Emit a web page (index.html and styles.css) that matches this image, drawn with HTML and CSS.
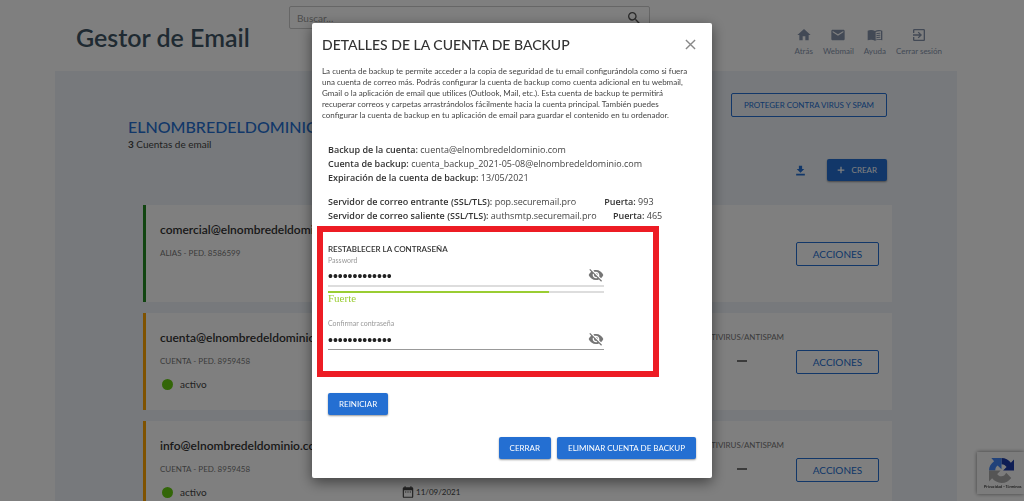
FILE: index.html
```html
<!DOCTYPE html>
<html lang="es">
<head>
    <meta charset="UTF-8">
    <meta name="viewport" content="width=device-width, initial-scale=1.0">
    <title>Gestor de Email</title>
    <link rel="stylesheet" href="styles.css">
</head>
<body>
    <header class="header">
        <h1>Gestor de Email</h1>
        <form class="search">
            <input type="search" placeholder="Buscar..." aria-label="Buscar">
            <button type="button" aria-label="Buscar">
                <svg viewBox="0 0 24 24"><path d="M15.5 14h-.79l-.28-.27A6.47 6.47 0 0 0 16 9.5 6.5 6.5 0 1 0 9.5 16c1.61 0 3.09-.59 4.23-1.57l.27.28v.79l5 4.99L20.49 19l-4.99-5zm-6 0C7.01 14 5 11.99 5 9.5S7.01 5 9.5 5 14 7.01 14 9.5 11.99 14 9.5 14z"/></svg>
            </button>
        </form>
        <nav class="menu">
            <a href="#"><svg viewBox="0 0 24 24"><path d="M10 20v-6h4v6h5v-8h3L12 3 2 12h3v8z"/></svg>Atrás</a>
            <a href="#"><svg viewBox="0 0 24 24"><path d="M20 4H4c-1.100 0-2 .9-2 2v12c0 1.100.9 2 2 2h16c1.100 0 2-.9 2-2V6c0-1.100-.9-2-2-2zm0 4-8 5-8-5V6l8 5 8-5z"/></svg>Webmail</a>
            <a href="#"><svg viewBox="0 0 24 24"><path fill-rule="evenodd" d="M12 6C9 4 4 4 1 5.500V20c3-1.300 8-1.300 11 .5 3-1.800 8-1.800 11-.5V5.500C20 4 15 4 12 6zm9 12.500c-3-.7-6-.3-8 .7V7.500c2-1 5-1.500 8-1zM14 9.500c2-.8 4-1 6-.7v1.500c-2-.3-4-.1-6 .7zm0 3c2-.8 4-1 6-.7v1.500c-2-.3-4-.1-6 .7zm0 3c2-.8 4-1 6-.7v1.500c-2-.3-4-.1-6 .7z"/></svg>Ayuda</a>
            <a href="#"><svg viewBox="0 0 24 24"><path d="M10.090 15.590 11.500 17l5-5-5-5-1.410 1.410L12.670 11H3v2h9.670zM19 3H5a2 2 0 0 0-2 2v4h2V5h14v14H5v-4H3v4a2 2 0 0 0 2 2h14c1.100 0 2-.9 2-2V5c0-1.100-.9-2-2-2z"/></svg>Cerrar sesión</a>
        </nav>
    </header>

    <main class="panel">
        <div class="panel-top">
            <button class="btn-outline" type="button">PROTEGER CONTRA VIRUS Y SPAM</button>
        </div>
        <h2>ELNOMBREDELDOMINIO.COM</h2>
        <p class="count"><b>3</b> Cuentas de email</p>
        <div class="tools">
            <button class="download" type="button" aria-label="Descargar">
                <svg viewBox="0 0 24 24"><path d="M19 9h-4V3H9v6H5l7 7zM4 18v3h16v-3z"/></svg>
            </button>
            <button class="btn" type="button"><svg viewBox="0 0 24 24"><path d="M20 13.500h-6.500V20h-3v-6.500H4v-3h6.500V4h3v6.500H20z"/></svg>CREAR</button>
        </div>

        <div class="cards">
            <article class="card alias">
                <div class="info">
                    <h3>comercial@elnombredeldominio.com</h3>
                    <p class="type">ALIAS - PED. 8586599</p>
                </div>
                <button class="btn-outline actions" type="button">ACCIONES</button>
            </article>
            <article class="card">
                <div class="info">
                    <h3>cuenta@elnombredeldominio.com</h3>
                    <p class="type">CUENTA - PED. 8959458</p>
                    <p class="status"><span class="dot"></span>activo</p>
                </div>
                <p class="date"><svg viewBox="0 0 24 24"><path d="M9 11H7v2h2zm4 0h-2v2h2zm4 0h-2v2h2zm2-7h-1V2h-2v2H8V2H6v2H5a2 2 0 0 0-2 2v14a2 2 0 0 0 2 2h14a2 2 0 0 0 2-2V6a2 2 0 0 0-2-2zm0 16H5V9h14z"/></svg>11/09/2021</p>
                <p class="antivirus">ANTIVIRUS/ANTISPAM<span class="dash"></span></p>
                <button class="btn-outline actions" type="button">ACCIONES</button>
            </article>
            <article class="card">
                <div class="info">
                    <h3>info@elnombredeldominio.com</h3>
                    <p class="type">CUENTA - PED. 8959458</p>
                    <p class="status"><span class="dot"></span>activo</p>
                </div>
                <p class="date"><svg viewBox="0 0 24 24"><path d="M9 11H7v2h2zm4 0h-2v2h2zm4 0h-2v2h2zm2-7h-1V2h-2v2H8V2H6v2H5a2 2 0 0 0-2 2v14a2 2 0 0 0 2 2h14a2 2 0 0 0 2-2V6a2 2 0 0 0-2-2zm0 16H5V9h14z"/></svg>11/09/2021</p>
                <p class="antivirus">ANTIVIRUS/ANTISPAM<span class="dash"></span></p>
                <button class="btn-outline actions" type="button">ACCIONES</button>
            </article>
        </div>
    </main>

    <!-- reCAPTCHA badge -->
    <div class="captcha">
        <svg viewBox="0 0 64 64">
            <path fill="#1c3aa9" d="M64 32V4l-8 8C50 5 42 0 32 0v16c6 0 10 3 13 7l-9 9z"/>
            <path fill="#4285f4" d="M32 0H6l7 8C5 14 0 22 0 32h16c0-6 2-10 6-13l10 10z"/>
            <path fill="#ababab" d="M0 32v28l8-8c6 7 14 12 24 12 11 0 19-5 25-13L44 38c-3 6-7 9-12 9-6 0-10-3-11-6l9-9z"/>
        </svg>
        <p>Privacidad - Términos</p>
    </div>

    <!-- Backup account modal -->
    <div class="overlay">
        <div class="modal" role="dialog" aria-labelledby="modalTitle">
            <div class="modal-header">
                <h2 id="modalTitle">DETALLES DE LA CUENTA DE BACKUP</h2>
                <button class="close" type="button" aria-label="Cerrar">
                    <svg viewBox="0 0 12 12"><path d="M1 1l10 10M11 1 1 11"/></svg>
                </button>
            </div>
            <p class="intro">La cuenta de backup te permite acceder a la copia de seguridad de tu email configurándola como si fuera<br>
                una cuenta de correo más. Podrás configurar la cuenta de backup como cuenta adicional en tu webmail,<br>
                Gmail o la aplicación de email que utilices (Outlook, Mail, etc.). Esta cuenta de backup te permitirá<br>
                recuperar correos y carpetas arrastrándolos fácilmente hacia la cuenta principal. También puedes<br>
                configurar la cuenta de backup en tu aplicación de email para guardar el contenido en tu ordenador.</p>
            <div class="details">
                <p><b>Backup de la cuenta:</b> cuenta@elnombredeldominio.com</p>
                <p><b>Cuenta de backup:</b> cuenta_backup_2021-05-08@elnombredeldominio.com</p>
                <p><b>Expiración de la cuenta de backup:</b> 13/05/2021</p>
            </div>
            <div class="details servers">
                <p><b>Servidor de correo entrante (SSL/TLS):</b> pop.securemail.pro &nbsp;&nbsp;&nbsp;&nbsp;&nbsp;<span class="port"><b>Puerta:</b> 993</span></p>
                <p><b>Servidor de correo saliente (SSL/TLS):</b> authsmtp.securemail.pro <span class="port"><b>Puerta:</b> 465</span></p>
            </div>

            <form class="reset">
                <h3>RESTABLECER LA CONTRASEÑA</h3>
                <label for="password">Password</label>
                <div class="field strong">
                    <input type="password" id="password" value="contrasena123">
                    <button type="button" aria-label="Mostrar contraseña">
                        <svg viewBox="0 0 24 24"><path d="M12 7c2.760 0 5 2.240 5 5 0 .65-.13 1.260-.36 1.830l2.920 2.920c1.510-1.260 2.700-2.890 3.430-4.750C21.270 7.610 17 4.500 12 4.500c-1.400 0-2.740.25-3.980.7l2.160 2.160C10.740 7.130 11.350 7 12 7zM2 4.270l2.740 2.740C3.080 8.300 1.780 10.020 1 12c1.730 4.390 6 7.500 11 7.500 1.550 0 3.030-.3 4.380-.84L19.730 22 21 20.730 3.270 3zM7.530 9.800l1.550 1.550c-.05.21-.08.43-.08.65 0 1.660 1.340 3 3 3 .22 0 .44-.03.65-.08l1.550 1.550c-.67.33-1.410.53-2.200.53-2.760 0-5-2.240-5-5 0-.79.2-1.530.53-2.200zm4.310-.78 3.150 3.150.02-.16c0-1.660-1.340-3-3-3z"/></svg>
                    </button>
                </div>
                <div class="meter"><div class="meter-fill" style="width: 80%"></div></div>
                <p class="strength">Fuerte</p>
                <label for="confirm">Confirmar contraseña</label>
                <div class="field">
                    <input type="password" id="confirm" value="contrasena123">
                    <button type="button" aria-label="Mostrar contraseña">
                        <svg viewBox="0 0 24 24"><path d="M12 7c2.760 0 5 2.240 5 5 0 .65-.13 1.260-.36 1.830l2.920 2.920c1.510-1.260 2.700-2.890 3.430-4.750C21.270 7.610 17 4.500 12 4.500c-1.400 0-2.740.25-3.980.7l2.160 2.160C10.740 7.130 11.350 7 12 7zM2 4.270l2.740 2.740C3.080 8.300 1.780 10.020 1 12c1.730 4.390 6 7.500 11 7.500 1.550 0 3.030-.3 4.380-.84L19.730 22 21 20.730 3.270 3zM7.530 9.800l1.550 1.550c-.05.21-.08.43-.08.65 0 1.660 1.340 3 3 3 .22 0 .44-.03.65-.08l1.550 1.550c-.67.33-1.410.53-2.200.53-2.760 0-5-2.240-5-5 0-.79.2-1.530.53-2.200zm4.310-.78 3.150 3.150.02-.16c0-1.660-1.340-3-3-3z"/></svg>
                    </button>
                </div>
            </form>

            <button class="btn restart" type="button">REINICIAR</button>
            <div class="modal-footer">
                <button class="btn" type="button">CERRAR</button>
                <button class="btn" type="button">ELIMINAR CUENTA DE BACKUP</button>
            </div>
        </div>
    </div>
</body>
</html>
```
FILE: styles.css
```css
* { box-sizing: border-box; }
body { font-family: Lato, sans-serif; margin: 0; color: #444; background: white; overflow: hidden; }
h1, h2, h3, p { margin: 0; }
button { font-family: inherit; cursor: pointer; padding: 0; border: none; background: none; }
svg { display: block; fill: currentColor; }

/* Header */
.header { display: grid; grid-template-columns: 213px 361px 1fr; height: 71px; padding: 6px 82px 0 76px; }
.header h1 { font-size: 25px; font-weight: 600; line-height: 30px; padding-top: 16px; color: #3f5564; white-space: nowrap; }
.search { display: flex; align-items: center; height: 23px; border: 1px solid #ccc; border-radius: 2px; padding: 0 7px; }
.search input { flex: 1; min-width: 0; border: none; outline: none; background: none; font-family: inherit; font-size: 10px; padding: 0; }
.search input::placeholder { color: #999; }
.search svg { width: 16px; height: 16px; color: #555; }
.menu { display: flex; justify-content: flex-end; gap: 10px; padding-top: 21px; }
.menu a { display: flex; flex-direction: column; align-items: center; gap: 2px; font-size: 8px; line-height: 12px; color: #8593ab; text-decoration: none; white-space: nowrap; }
.menu svg { width: 16px; height: 16px; }

/* Buttons */
.btn { display: flex; align-items: center; gap: 6px; height: 22px; padding: 0 11px; border-radius: 2px; background: #246fd2; color: white; font-size: 8px; box-shadow: 0 1px 2px rgba(0,0,0,0.4); }
.btn svg { width: 10px; height: 10px; }
.btn-outline { height: 24px; border: 1px solid #246fd2; border-radius: 2px; color: #246fd2; font-size: 8px; padding: 0 12px; }

/* Accounts panel */
.panel { margin: 0 67px 0 55px; padding: 22px 65px 40px 73px; background: #eef3f9; }
.panel-top { display: flex; justify-content: flex-end; padding-right: 5px; }
.panel h2 { font-size: 16px; font-weight: 500; line-height: 20px; color: #246fd2; }
.count { font-size: 10px; line-height: 14px; }
.tools { display: flex; justify-content: flex-end; align-items: center; gap: 20px; padding: 8px 5px 0 0; }
.tools .btn { padding: 0 10px 0 9px; }
.download { color: #246fd2; }
.download svg { width: 13px; height: 13px; }
.cards { display: flex; flex-direction: column; gap: 11px; margin: 24px 0 0 15px; }
.card { display: flex; align-items: center; height: 97px; padding: 0 13px 0 14px; background: white; border-left: 3px solid #ffa500; }
.card.alias { border-left-color: #228b22; }
.info { align-self: flex-start; width: 241px; padding-top: 16px; }
.card h3 { font-size: 12px; font-weight: 600; line-height: 18px; color: #333; white-space: nowrap; }
.type { font-size: 8px; line-height: 12px; margin-top: 8px; color: #777; }
.status { display: flex; align-items: center; gap: 7px; padding-left: 2px; margin-top: 10px; font-size: 10px; line-height: 14px; }
.dot { width: 11px; height: 11px; border-radius: 50%; background: #66cc11; }
.date { display: flex; align-items: center; align-self: flex-end; gap: 1px; font-size: 8px; line-height: 14px; padding-bottom: 19px; }
.date svg { width: 14px; height: 14px; }
.antivirus { display: flex; flex-direction: column; align-items: center; align-self: flex-start; gap: 17px; margin: 18px 12px 0 auto; font-size: 8px; line-height: 12px; color: #777; }
.dash { width: 10px; height: 2px; background: #777; }
.actions { width: 83px; font-size: 10px; }
.alias .actions { margin-left: auto; }

/* reCAPTCHA badge */
.captcha { position: fixed; right: 0; bottom: 7px; width: 47px; height: 42px; padding: 6px 0 0 12px; background: #f9f9f9; box-shadow: 0 0 4px #808080; }
.captcha svg { width: 25px; height: 25px; }
.captcha p { font-size: 4px; line-height: 6px; margin: 1px 0 0 -5px; color: black; white-space: nowrap; }

/* Modal */
.overlay { position: fixed; inset: 0; display: flex; align-items: center; justify-content: center; background: rgba(0,0,0,0.5); }
.modal { width: 400px; padding: 10px 16px 19px 10px; background: white; border-radius: 2px; box-shadow: 0 4px 14px rgba(0,0,0,0.5); }
.modal-header { display: flex; align-items: center; justify-content: space-between; height: 22px; }
.modal-header h2 { font-size: 14px; font-weight: 500; color: #333; }
.close svg { width: 11px; height: 11px; stroke: #888; stroke-width: 1.5; }
.intro { margin-top: 11px; font-size: 8px; line-height: 11px; white-space: nowrap; }
.details { margin: 22px 0 0 6px; font-family: "Open Sans", sans-serif; font-size: 9px; line-height: 14px; white-space: nowrap; }
.details b, .reset h3 { font-weight: 600; color: #333; }
.details.servers { margin-top: 10px; }
.port { margin-left: 14px; }
.reset { width: 342px; margin: 3px 0 16px -5px; padding: 12px 49px 21px 5px; border: 6px solid #ed1c24; }
.reset h3 { font-size: 8px; line-height: 11px; }
.reset label { display: block; font-size: 7px; line-height: 10px; color: #999; }
.field { display: flex; align-items: center; height: 22px; border-bottom: 1px solid #999; }
.field.strong { border-bottom: 2px solid #ddd; }
.field input { flex: 1; min-width: 0; border: none; outline: none; padding: 2px 0 0; font-family: "Liberation Sans", sans-serif; font-size: 14px; color: #222; }
.field svg { width: 16px; height: 16px; color: #757575; }
.meter { height: 2px; margin-top: 4px; background: #ddd; }
.meter-fill { height: 2px; background: #9acd32; }
.strength { font-family: "Liberation Serif", serif; font-size: 11px; line-height: 10px; margin-bottom: 15px; color: #9acd32; }
.restart { margin-left: 6px; }
.modal-footer { display: flex; justify-content: flex-end; gap: 6px; margin-top: 22px; }
```
